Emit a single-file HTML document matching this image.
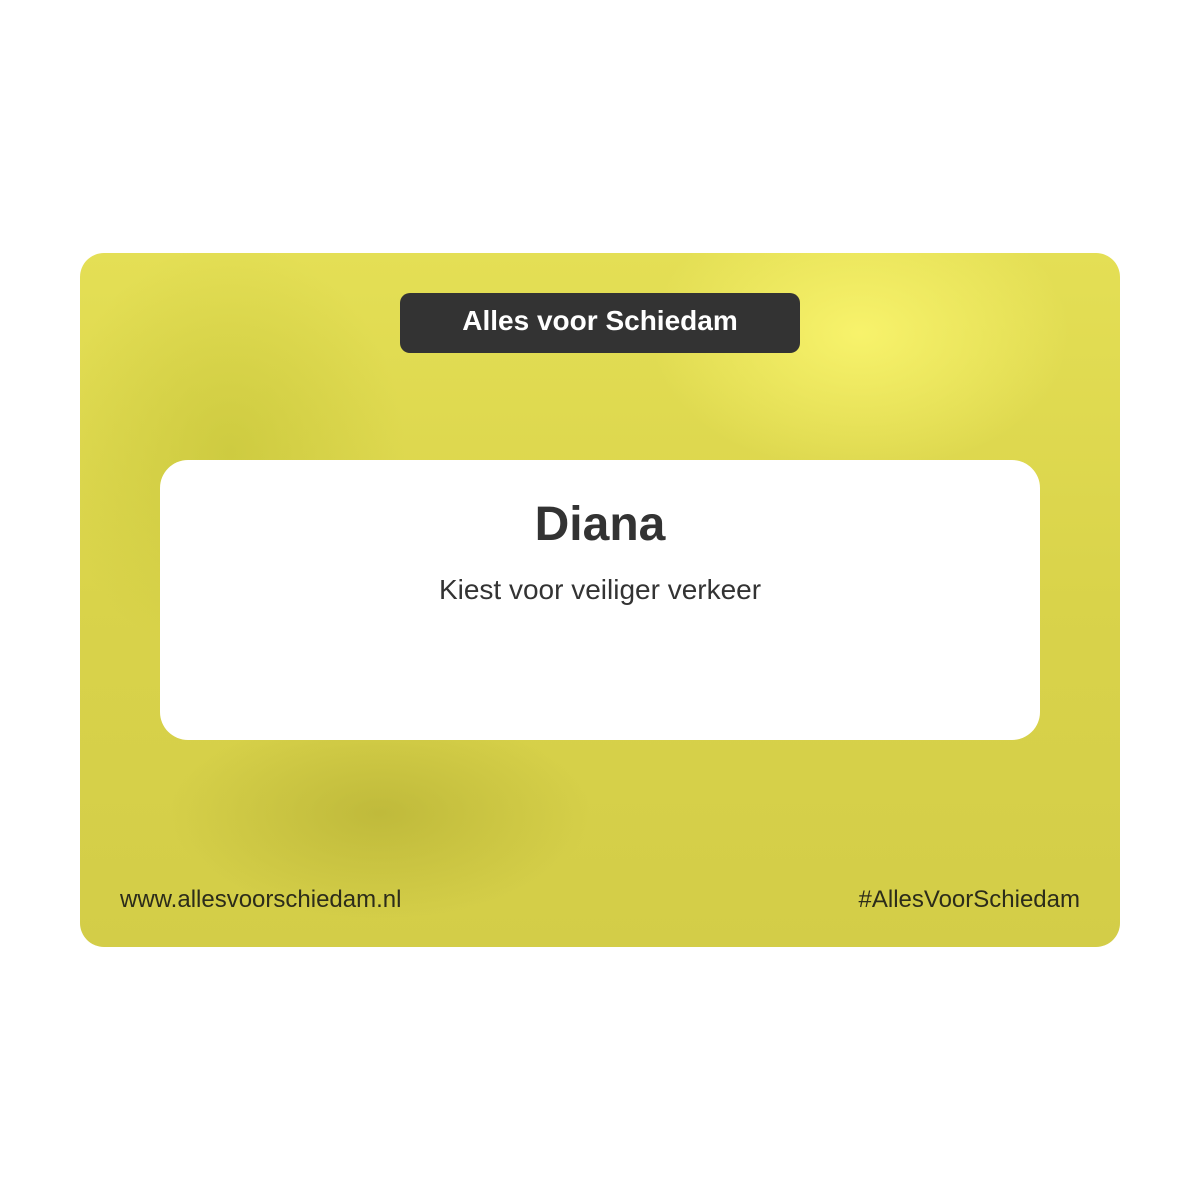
<!DOCTYPE html>
<html><head><meta charset="utf-8"><style>
html,body{margin:0;padding:0;background:#fff;width:1200px;height:1200px;overflow:hidden;font-family:"Liberation Sans",Arial,sans-serif;}
.card{position:absolute;left:80px;top:253px;width:1040px;height:694px;border-radius:24px;overflow:hidden;
background:
radial-gradient(ellipse 300px 200px at 780px 80px,rgba(250,245,110,0.9),rgba(250,245,110,0) 70%),
radial-gradient(ellipse 250px 300px at 150px 200px,rgba(190,190,50,0.5),rgba(190,190,50,0) 70%),
radial-gradient(ellipse 300px 150px at 300px 560px,rgba(170,165,45,0.5),rgba(170,165,45,0) 70%),
linear-gradient(180deg,#e4df55 0%,#d9d34a 50%,#d3cd48 100%);}
.pill{position:absolute;left:320px;top:40px;width:400px;height:60px;border-radius:10px;background:#333;color:#fff;font-weight:bold;font-size:28px;line-height:55px;text-align:center;}
.box{position:absolute;left:80px;top:207px;width:880px;height:280px;border-radius:28px;background:#fff;text-align:center;color:#333;}
.name{font-weight:bold;font-size:48px;margin-top:38px;line-height:54px;}
.sub{font-size:28px;margin-top:22px;line-height:32px;}
.f{position:absolute;top:633px;font-size:24px;color:#2c2c1a;line-height:28px;}
</style></head><body>
<div class="card">
<div class="pill">Alles voor Schiedam</div>
<div class="box"><div class="name">Diana</div><div class="sub">Kiest voor veiliger verkeer</div></div>
<div class="f" style="left:40px">www.allesvoorschiedam.nl</div>
<div class="f" style="right:40px">#AllesVoorSchiedam</div>
</div>
</body></html>
